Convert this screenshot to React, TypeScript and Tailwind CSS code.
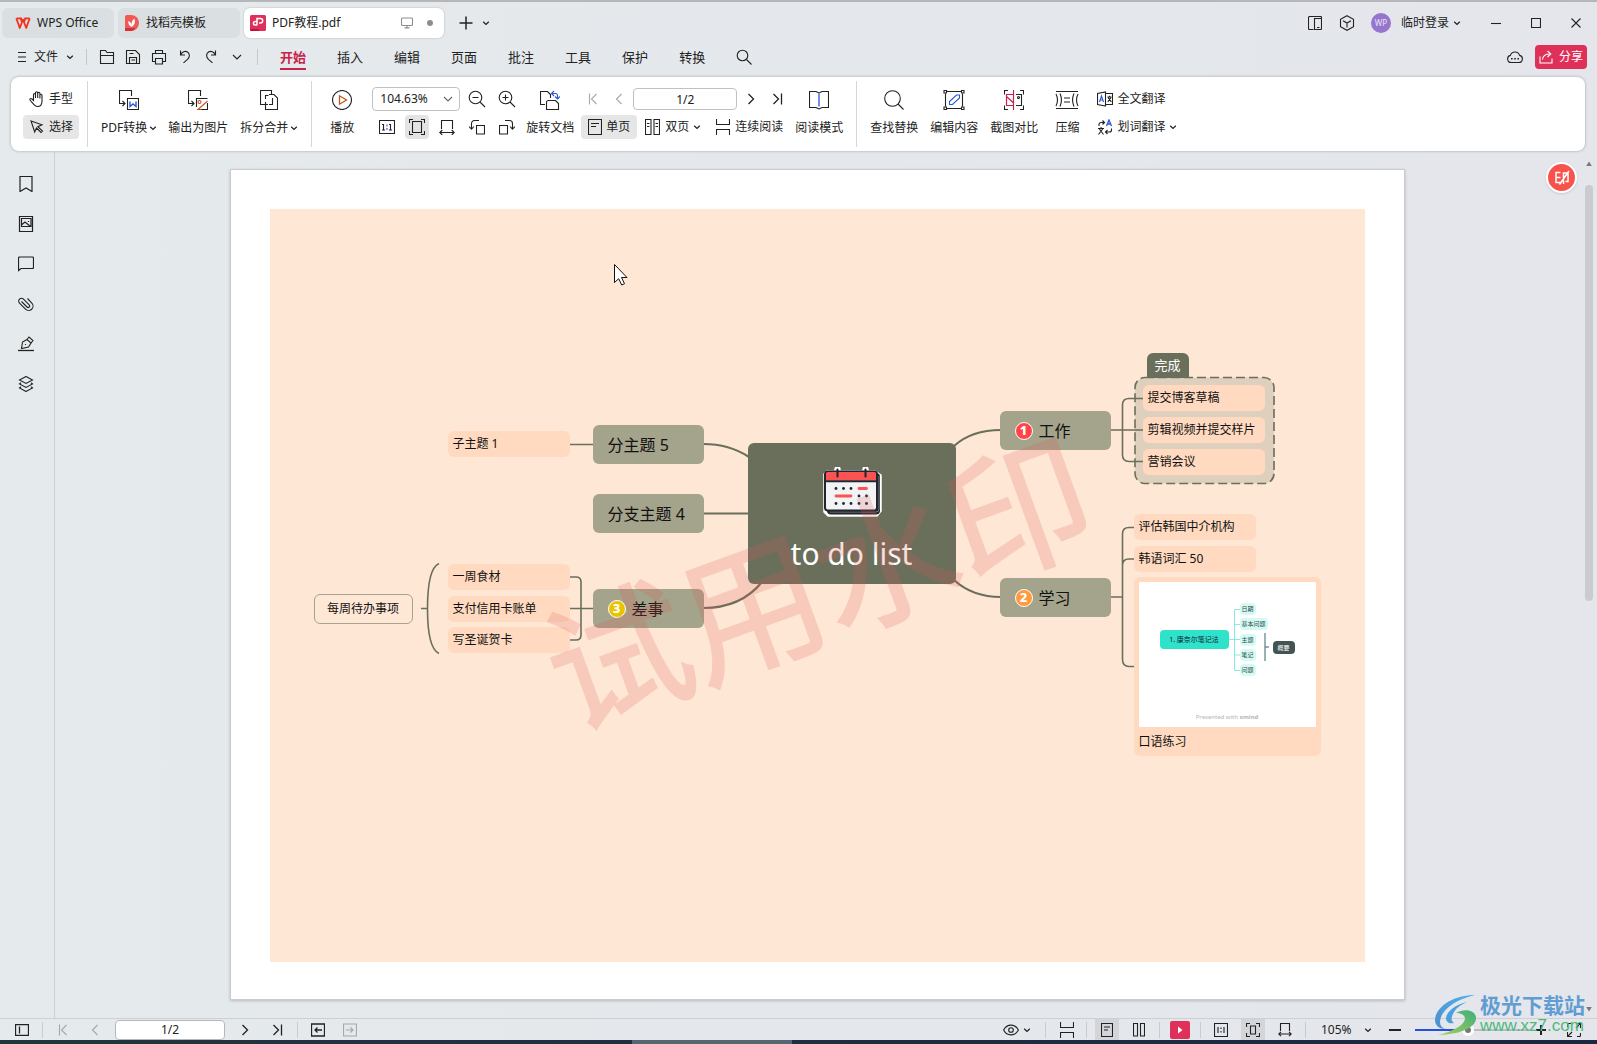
import React from "react";

type SvgProps = { w?: number; h?: number; className?: string; children: React.ReactNode };

function Svg({ w = 16, h = 16, className = "", children }: SvgProps) {
  return (
    <svg
      width={w}
      height={h}
      viewBox={`0 0 ${w} ${h}`}
      fill="none"
      stroke="currentColor"
      strokeWidth="1.1"
      className={`shrink-0 ${className}`}
      aria-hidden="true"
    >
      {children}
    </svg>
  );
}

const Chevron = ({ className = "" }: { className?: string }) => (
  <Svg w={8} h={8} className={className}>
    <path d="M1.2 2.8 4 5.4 6.800 2.800" strokeWidth="1.3" />
  </Svg>
);
const WideChevron = ({ className = "" }: { className?: string }) => (
  <Svg w={10} h={8} className={className}>
    <path d="M1 2 5 6 9 2" />
  </Svg>
);
const FirstIcon = () => (
  <Svg w={12} h={12}>
    <path d="M2.500 0.500v11M9.500 1 4.500 6l5 5" />
  </Svg>
);
const PrevIcon = () => (
  <Svg w={12} h={12}>
    <path d="M8.500 1 3.500 6l5 5" />
  </Svg>
);
const NextIcon = () => (
  <Svg w={12} h={12}>
    <path d="M3.500 1 8.500 6l-5 5" strokeWidth="1.3" />
  </Svg>
);
const LastIcon = () => (
  <Svg w={12} h={12}>
    <path d="M10.500 0.500v11M2.500 1l5 5-5 5" strokeWidth="1.3" />
  </Svg>
);
const Magnifier = ({ sign = "" }: { sign?: "" | "+" | "-" }) => (
  <Svg w={18} h={18}>
    <circle cx="7.500" cy="7.500" r="6.300" />
    <path d="m12 12 5 5" />
    {sign !== "" && <path d="M4.500 7.500h6" />}
    {sign === "+" && <path d="M7.500 4.500v6" />}
  </Svg>
);
const FitPage = () => (
  <Svg>
    <path d="M0.500 4V0.500H4M12 0.500h3.500V4M15.500 12v3.500H12M4 15.500H0.500V12" />
    <path d="M3.500 2.500h9v11h-9z" />
  </Svg>
);
const FitWidth = () => (
  <Svg>
    <path d="M2.500 10V1.500h11V10M0.800 13.500h14.400M3.300 11l-2.500 2.500L3.300 16M12.700 11l2.500 2.500-2.500 2.500" />
  </Svg>
);
const SinglePage = () => (
  <Svg w={14} h={16}>
    <path d="M0.500 0.500h13v15h-13zM3 4.500h8M3 7.500h5" />
  </Svg>
);
const Continuous = () => (
  <Svg w={14} h={16}>
    <path d="M0.500 0v5.500h13V0M0.500 16v-5.500h13V16" />
  </Svg>
);

function WpsLogo() {
  return (
    <svg width="16" height="13" viewBox="0 0 16 13" className="shrink-0" aria-hidden="true">
      <path d="M1.500 1.400H6.800M9.400 1.400h5.200" stroke="#f4321f" strokeWidth="1.800" fill="none" />
      <path d="M1.300 1.400 4.800 11 8 2.500 11.200 11 14.700 1.400M5.600 1.400 6.900 5M10.200 1.400 9.100 5" stroke="#f4321f" strokeWidth="1.800" fill="none" strokeLinejoin="round" />
    </svg>
  );
}

function DocerLogo() {
  return (
    <svg width="14" height="16" viewBox="0 0 14 16" className="shrink-0" aria-hidden="true">
      <path d="M2 0h4a8 8 0 0 1 0 16H0V2a2 2 0 0 1 2-2z" fill="#ee5a55" />
      <path d="M0 13h10.500A8 8 0 0 1 6 16H0z" fill="#d92d3a" />
      <path d="M6.500 12C4 10.500 3 8.500 3.300 6c2 .7 3 2.300 3.200 4C6.300 7.500 7.500 4.800 9.300 3.500c1.400 3.500.3 7-2.800 8.500z" fill="#fff" />
    </svg>
  );
}

function PdfLogo() {
  return (
    <svg width="16" height="16" viewBox="0 0 16 16" className="shrink-0" aria-hidden="true">
      <rect width="16" height="16" rx="1.500" fill="#df3059" />
      <path d="M0 14h8l2 2H1.500A1.500 1.500 0 0 1 0 14.500z" fill="#b81642" />
      <path d="M7 10.200V3.500h3.500a2.200 2.200 0 0 1 0 4.400H9M7 6.500H5.200a1.700 1.700 0 0 0 0 3.500H7" fill="none" stroke="#fff" strokeWidth="1.500" />
    </svg>
  );
}

function TitleBar() {
  return (
    <div className="flex shrink-0 items-center pt-1.5 pr-4 pl-[2px] text-xs">
      <div role="tablist" className="flex gap-1">
        <button role="tab" className="flex h-[30px] w-[112px] items-center gap-1.5 rounded-md bg-[#dadfe1] pl-[13px] whitespace-nowrap">
          <WpsLogo />
          WPS Office
        </button>
        <button role="tab" className="flex h-[30px] w-[122px] items-center gap-[7px] rounded-md bg-[#dadfe1] pl-[7px]">
          <DocerLogo />
          找稻壳模板
        </button>
        <button role="tab" aria-selected="true" className="flex h-[30px] w-[200px] items-center gap-1.5 rounded-md bg-white pl-1.5 pr-[11px] shadow-[0_0_2px_rgba(0,0,0,0.25)]">
          <PdfLogo />
          PDF教程.pdf
          <Svg w={12} h={12} className="ml-auto text-[#8b8f92]">
            <rect x="0.500" y="1" width="11" height="7.500" rx="1" />
            <path d="M3.500 10.900h5M6 8.500v2.500" />
          </Svg>
          <span className="ml-2 size-1.5 rounded-full bg-[#8b8f92]" />
        </button>
      </div>
      <button aria-label="新建标签" className="ml-[15px]">
        <Svg w={14} h={14}>
          <path d="M7 0.500v13M0.500 7h13" strokeWidth="1.500" />
        </Svg>
      </button>
      <button aria-label="标签列表" className="ml-[9px]">
        <Chevron />
      </button>
      <div className="ml-auto flex items-center">
        <button aria-label="侧栏">
          <Svg w={14} h={14}>
            <path d="M5.500 13.500H1.500a1 1 0 0 1-1-1v-11a1 1 0 0 1 1-1h11a1 1 0 0 1 1 1v1" />
            <path d="M6.500 2.500h7v10a1 1 0 0 1-1 1h-6zM9 11.500h2.500" />
          </Svg>
        </button>
        <button aria-label="应用" className="ml-[17px]">
          <Svg w={16} h={16}>
            <path d="M8 0.700 14.500 4.300v7.400L8 15.300 1.500 11.700V4.300zM4 5.700 8 8l4-2.300M8 8v4.500" />
          </Svg>
        </button>
        <button className="ml-4 flex items-center">
          <span className="flex size-5 items-center justify-center rounded-full bg-[#9575cd] text-[8px] text-white/80">WP</span>
          <span className="ml-2.5">临时登录</span>
          <Chevron className="ml-1" />
        </button>
        <button aria-label="最小化" className="ml-[30px]">
          <Svg w={10} h={10}>
            <path d="M0 5.500h10" />
          </Svg>
        </button>
        <button aria-label="最大化" className="ml-[30px]">
          <Svg w={10} h={10}>
            <path d="M0.500 0.500h9v9h-9z" />
          </Svg>
        </button>
        <button aria-label="关闭" className="ml-[30px]">
          <Svg w={10} h={10}>
            <path d="m0.500 0.500 9 9M9.500 0.500l-9 9" />
          </Svg>
        </button>
      </div>
    </div>
  );
}

const menus = ["开始", "插入", "编辑", "页面", "批注", "工具", "保护", "转换"];

function MenuBar() {
  return (
    <div className="flex h-[39px] shrink-0 items-center pr-2.5 pb-px pl-[17px] text-xs">
      <button className="flex items-center">
        <Svg w={10} h={12}>
          <path d="M1 1.500h8M1 6h8M1 10.500h8" />
        </Svg>
        <span className="ml-[7px]">文件</span>
        <Chevron className="ml-2" />
      </button>
      <div className="ml-3 h-4 w-px bg-[#c5c9cc]" />
      <div className="ml-3 flex items-center gap-2.5">
        <button aria-label="打开">
          <Svg>
            <path d="M1.500 14.500v-13h5l1.500 2h6.500v11zM1.500 6.500h13" />
          </Svg>
        </button>
        <button aria-label="保存">
          <Svg>
            <path d="M1.500 1.500h9l4 4v9h-13zM4.500 14.500v-6h7v6M6.500 11h3.500M4.500 4.500h4" />
          </Svg>
        </button>
        <button aria-label="打印">
          <Svg>
            <path d="M4.500 4.500v-3h7v3M4.500 12.500h-3v-8h13v8h-3M4.500 9.500h7v5.500h-7z" />
          </Svg>
        </button>
        <button aria-label="撤销">
          <Svg>
            <path d="M3.500 1.500v4.500h4.500M3.500 6c1.500-3 4.500-4.500 7-3 2.500 1.700 2.500 5 0 7.300L6.500 13.800" />
          </Svg>
        </button>
        <button aria-label="恢复">
          <Svg>
            <path d="M12.500 1.500v4.500H8M12.500 6c-1.500-3-4.500-4.500-7-3-2.500 1.700-2.500 5 0 7.300l4 3.500" />
          </Svg>
        </button>
        <button aria-label="更多" className="ml-[3px]">
          <WideChevron />
        </button>
      </div>
      <div className="ml-[15px] h-4 w-px bg-[#c5c9cc]" />
      <nav className="ml-[22px] flex gap-[31px] text-[13px]">
        {menus.map((m, i) => (
          <button
            key={m}
            className={
              i === 0
                ? "h-[26px] border-b-2 border-[#c9234d] pt-0.5 leading-5 font-bold text-[#c9234d]"
                : "h-[26px] border-b-2 border-transparent pt-0.5 leading-5"
            }
          >
            {m}
          </button>
        ))}
      </nav>
      <button aria-label="搜索" className="ml-[31px]">
        <Svg>
          <circle cx="6.500" cy="6.500" r="5.300" />
          <path d="m10.500 10.500 5 5" />
        </Svg>
      </button>
      <button aria-label="云同步" className="ml-auto">
        <Svg w={16} h={14}>
          <path d="M4.300 12.500a3.600 3.600 0 0 1-.9-7.100 4.800 4.800 0 0 1 9.200 0 3.600 3.600 0 0 1-.9 7.100z" />
          <path d="M4 8.800h1.600M7.200 8.800h1.600M10.400 8.800h1.600" strokeWidth="1.600" />
        </Svg>
      </button>
      <button className="ml-3 flex h-6 w-[52px] items-center justify-center gap-1.5 rounded bg-[#df3059] text-white">
        <Svg w={14} h={14}>
          <path d="M1 6.500v6.500h12V8.500M3.500 9.500C4 5.500 6.500 4 10.500 4M8.500 1l3.300 3-3.300 3" />
        </Svg>
        分享
      </button>
    </div>
  );
}

function BigButton({ icon, label, arrow = false, className = "" }: { icon: React.ReactNode; label: string; arrow?: boolean; className?: string }) {
  return (
    <button className={`flex shrink-0 flex-col items-center gap-1 ${className}`}>
      <span className="flex h-[26px] items-center">{icon}</span>
      <span className="flex h-[22px] items-center whitespace-nowrap">
        {label}
        {arrow && <Chevron className="ml-0.5" />}
      </span>
    </button>
  );
}

const Divider = ({ className = "" }: { className?: string }) => <div className={`-mt-1.5 -mb-2 h-[66px] w-px shrink-0 bg-[#d5d7d9] ${className}`} />;

const squareBtn = "flex size-6 shrink-0 items-center justify-center rounded";

function Ribbon() {
  return (
    <div className="mr-3 ml-[11px] flex shrink-0 items-start overflow-hidden rounded-lg bg-white pt-2.5 pb-3 text-xs whitespace-nowrap shadow-[0_0_3px_rgba(0,0,0,0.3)]">
      <div className="ml-3 flex w-14 shrink-0 flex-col gap-1">
        <button className="flex h-6 items-center justify-center gap-1">
          <Svg>
            <path d="M4.500 8V3.500a1 1 0 0 1 2 0V7M6.500 7V1.800a1 1 0 0 1 2.200 0V7M8.700 7V2.500a1 1 0 0 1 2.200 0V7.500M10.900 7V4.300a1 1 0 0 1 2.100 0V10c0 3.500-1.500 5.500-4.500 5.500S4.800 13.500 1 9c-.5-1.300 1-2 2-1l1.500 1.500V7" />
          </Svg>
          手型
        </button>
        <button className="flex h-6 items-center justify-center gap-1 rounded bg-[#e6e6e6]">
          <Svg>
            <path d="m2 2 11 3.800-4.200 1.900L13.500 12 12 13.500 7.500 9l-1.800 4z" />
          </Svg>
          选择
        </button>
      </div>
      <Divider className="ml-2" />
      <BigButton
        className="ml-[13px]"
        label="PDF转换"
        arrow
        icon={
          <Svg w={20} h={20}>
            <path d="M6 13.500H0.500v-13h12V6M3.500 11 6 13.500 3.500 16" />
            <path d="M8.500 8.500h11v11h-11z" />
            <path d="M11 11.500v5l3-2.500 3 2.500v-5" stroke="#2a56d8" strokeWidth="1.400" />
          </Svg>
        }
      />
      <BigButton
        className="ml-[11px]"
        label="输出为图片"
        icon={
          <Svg w={20} h={20}>
            <path d="M6 13.500H0.500v-13h12V6M3.500 11 6 13.500 3.500 16" />
            <path d="M8.500 17V8.500h11M19.500 13v6.500H13" />
            <circle cx="11.500" cy="12" r="1.500" stroke="#c8521b" />
            <path d="m10 19.500 9.500-8.500M13 19.500h-4" stroke="#c8521b" />
          </Svg>
        }
      />
      <BigButton
        className="ml-3"
        label="拆分合并"
        arrow
        icon={
          <Svg w={18} h={20}>
            <path d="M8 14.500H0.500v-14h11V4M5.500 12v7.500h12V8L14 4.500H9M5.500 9V5.500h3M12.500 8v6.500H9" />
          </Svg>
        }
      />
      <Divider className="ml-[13px]" />
      <BigButton
        className="ml-[18px]"
        label="播放"
        icon={
          <Svg w={20} h={20}>
            <circle cx="10" cy="10" r="9.500" />
            <path d="M7.500 5.800v8.400l7-4.200z" stroke="#c8521b" strokeWidth="1.300" />
          </Svg>
        }
      />
      <div className="ml-[18px] flex shrink-0 flex-col gap-1">
        <div className="flex items-center">
          <div className="relative flex items-center">
            <select aria-label="缩放比例" className="h-6 w-[88px] appearance-none rounded border border-[#bfc2c4] bg-white pl-[7px] outline-none">
              <option>104.63%</option>
            </select>
            <WideChevron className="pointer-events-none absolute right-[7px] text-[#666]" />
          </div>
          <button aria-label="缩小" className={`${squareBtn} ml-[5px]`}>
            <Magnifier sign="-" />
          </button>
          <button aria-label="放大" className={`${squareBtn} ml-1.5`}>
            <Magnifier sign="+" />
          </button>
        </div>
        <div className="ml-[3px] flex gap-1.5">
          <button aria-label="实际大小" className={squareBtn}>
            <Svg>
              <path d="M0.500 1.500h15v13h-15z" />
              <path d="M3 5.500h1.500v5.500M3 11h3M10 5.500h1.500v5.500M10 11h3" />
              <path d="M8 5.500v2M8 9v2" stroke="#2a56d8" />
            </Svg>
          </button>
          <button aria-label="适合页面" className={`${squareBtn} bg-[#e3e3e3]`}>
            <FitPage />
          </button>
          <button aria-label="适合宽度" className={squareBtn}>
            <FitWidth />
          </button>
          <button aria-label="向左旋转" className={squareBtn}>
            <Svg>
              <path d="M7.500 6.500h8v8.500h-8zM10 1.500H5.500a3 3 0 0 0-3 3V10M0 7.500l2.500 2.700L5 7.500" />
            </Svg>
          </button>
          <button aria-label="向右旋转" className={squareBtn}>
            <Svg>
              <path d="M0.500 6.500h8v8.500h-8zM6 1.500h4.500a3 3 0 0 1 3 3V10M11 7.500l2.500 2.700L16 7.500" />
            </Svg>
          </button>
        </div>
      </div>
      <BigButton
        className="ml-[7px]"
        label="旋转文档"
        icon={
          <Svg w={20} h={20}>
            <path d="M5 14.500H0.500v-13h7l3 3V8M6.500 12.500a2 2 0 0 1 2-2h7l3 3v6h-12z" />
            <path d="M12 3.500h3.500a2 2 0 0 1 2 2V8M14 1l-2.500 2.500L14 6M15 6.500 17.500 9 20 6.500" stroke="#2a56d8" />
          </Svg>
        }
      />
      <div className="ml-[7px] flex shrink-0 flex-col gap-1">
        <div className="flex h-6 items-center">
          <button aria-label="第一页" className={`${squareBtn} text-[#a6a8aa]`}>
            <FirstIcon />
          </button>
          <button aria-label="上一页" className={`${squareBtn} ml-0.5 text-[#a6a8aa]`}>
            <PrevIcon />
          </button>
          <input aria-label="页码" defaultValue="1/2" className="ml-0.5 h-[22px] w-[104px] rounded border border-[#bfc2c4] bg-white text-center outline-none" />
          <button aria-label="下一页" className={`${squareBtn} ml-0.5`}>
            <NextIcon />
          </button>
          <button aria-label="最后一页" className={`${squareBtn} ml-0.5`}>
            <LastIcon />
          </button>
        </div>
        <div className="flex h-6 items-center">
          <button className="flex h-6 w-14 items-center justify-center gap-1 rounded bg-[#e6e6e6]">
            <SinglePage />
            单页
          </button>
          <button className="ml-2 flex items-center">
            <Svg w={15} h={16}>
              <path d="M0.500 0.500h5.500v15H0.500zM9 0.500h5.500v15H9zM2 4.500h2.500M2 7.500h2.500M10.500 4.500H13M10.500 7.500H13" />
            </Svg>
            <span className="ml-[5px]">双页</span>
            <Chevron className="ml-1" />
          </button>
          <button className="ml-[15px] flex items-center gap-[5px]">
            <Continuous />
            连续阅读
          </button>
        </div>
      </div>
      <BigButton
        className="ml-1.5"
        label="阅读模式"
        icon={
          <Svg w={20} h={20}>
            <path d="M0.500 17.500V1.500h6.500l3 1.500 3-1.500h6.500v16H13l-3 1.500-3-1.500z" />
            <path d="M10 3.500v13" stroke="#2a56d8" strokeWidth="1.300" />
          </Svg>
        }
      />
      <Divider className="ml-[13px]" />
      <BigButton
        className="ml-[13px]"
        label="查找替换"
        icon={
          <Svg w={20} h={20}>
            <circle cx="8.500" cy="8.500" r="7.800" />
            <path d="m14 14 5.500 5.500" />
          </Svg>
        }
      />
      <BigButton
        className="ml-3"
        label="编辑内容"
        icon={
          <Svg w={22} h={20}>
            <path d="M4 1.500h14M4 18.500h14M2.500 3.500v13M19.500 3.500v13" />
            <path d="M1 0.500h2.500V3H1zM18.500 0.500H21V3h-2.500zM1 17h2.500v2.500H1zM18.500 17H21v2.500h-2.500z" fill="#fff" />
            <path d="M6.500 14.500v-3l7-6.500h3v3l-7 6.500z" stroke="#2a56d8" />
          </Svg>
        }
      />
      <BigButton
        className="ml-3"
        label="截图对比"
        icon={
          <Svg w={20} h={20}>
            <path d="M0.500 4.500v-4H4M16 0.500h3.500v4M19.500 15.500v4H16M4 19.500H0.500v-4M12 4.500h5.500v11H12" />
            <circle cx="14.500" cy="7.500" r="1" />
            <path d="M9.500 4.500h-7v11h7M9.500 0v20M2.500 6.500l7 6.500" stroke="#c9234d" strokeWidth="1.200" />
          </Svg>
        }
      />
      <BigButton
        className="ml-[17px]"
        label="压缩"
        icon={
          <Svg w={24} h={20}>
            <path d="M1 1.500h22M1 18.500h22M1 4c2 4 2 8 0 12M23 4c-2 4-2 8 0 12M5 3.500c2 4.500 2 8.500 0 13M19 3.500c-2 4.500-2 8.500 0 13M9 8h6M9 12h6" />
          </Svg>
        }
      />
      <div className="ml-[18px] flex shrink-0 flex-col gap-1">
        <button className="flex h-6 items-center gap-1">
          <Svg>
            <path d="M8.500 15 0.500 13.500v-11L8.500 1zM8.500 2.500h7v11h-7M10.500 6h4M12.500 4.800V6M10.800 10.800 14 6.500M11 6.500l3.300 4.300" />
            <path d="m2.500 11 2-6 2 6M3 9h3" stroke="#2a56d8" />
          </Svg>
          全文翻译
        </button>
        <button className="flex h-6 items-center">
          <Svg>
            <path d="M2 7V5.500a2 2 0 0 1 2-2h3M5.500 1.500 7.500 3.500l-2 2M14.500 9.500V11a2 2 0 0 1-2 2H9M10.500 11l-2 2 2 2M1 9.500h6M4 8v1.500M1.500 15.500 6 9.500M2 9.500l4.500 6" />
            <path d="m9.500 7 2.500-6 2.500 6M10.500 5h3" stroke="#2a56d8" strokeWidth="1.300" />
          </Svg>
          <span className="ml-1">划词翻译</span>
          <Chevron className="ml-1" />
        </button>
      </div>
    </div>
  );
}

function SideBar() {
  return (
    <aside className="flex w-[55px] shrink-0 flex-col items-center gap-6 border-r border-[#cdd0d2] pt-[25px] pr-[2px]">
      <button aria-label="书签">
        <Svg>
          <path d="M2 0.500h12v15L8 12 2 15.500z" strokeWidth="1.200" />
        </Svg>
      </button>
      <button aria-label="缩略图">
        <Svg>
          <path d="M1.500 0.500h13v15h-13zM3.500 2.500h9.500v8H3.500zM4 8.500 7 6l5.500 4.500M10.500 5v1" strokeWidth="1.200" />
        </Svg>
      </button>
      <button aria-label="批注">
        <Svg>
          <path d="M0.500 14.500V2a1 1 0 0 1 1-1h13a1 1 0 0 1 1 1v9.500a1 1 0 0 1-1 1H3z" strokeWidth="1.200" />
        </Svg>
      </button>
      <button aria-label="附件">
        <Svg>
          <path d="M3.500 5.500 9 11a1.500 1.500 0 0 0 2.200-2.200L5.500 3.100a2.800 2.800 0 0 0-4 4l6 6a4.200 4.200 0 0 0 6.300-6L9.500 2.500" />
        </Svg>
      </button>
      <button aria-label="签名">
        <Svg>
          <path d="M0 14.500h16" strokeWidth="1.300" />
          <path d="M3.500 12.500 4.500 6 9 3.500l4 3.500-2.500 4zM9 3.500 11 1l4 3.500-2 2.500M7.500 8v1" />
        </Svg>
      </button>
      <button aria-label="图层">
        <Svg>
          <path d="M8 0.500 14.500 4 8 7.500 1.500 4zM3 6.800 1.500 8 8 11.500 14.500 8 13 6.800M3 10.800 1.500 12 8 15.500 14.500 12 13 10.800" />
        </Svg>
      </button>
    </aside>
  );
}

const branch = "absolute flex h-[39px] w-[111px] items-center gap-1.5 rounded-md bg-[#a4a38b] pl-[15px] text-base leading-6 text-[#111]";
const leaf = "absolute flex h-[26px] w-[122px] items-center rounded-md bg-[#ffdac0] pl-[5px] text-xs text-[#111]";

function Marker({ n, className }: { n: number; className: string }) {
  return (
    <span className={`flex size-[18px] items-center justify-center rounded-full border border-white text-[13px] leading-none font-extrabold text-white ${className}`}>
      {n}
    </span>
  );
}

function CalendarArt() {
  const rows = [21.5, 29, 36.5];
  const cols = [14, 21.5, 29, 37, 44.5];
  return (
    <svg width="60" height="50" viewBox="0 0 60 50" aria-hidden="true">
      <path d="M5 4h8V2.500a2.500 2.500 0 0 1 5 0V4h23V2.500a2.500 2.500 0 0 1 5 0V4h7l6 4v36l-4 5H6l-4-4V7z" fill="#fff" stroke="#fff" strokeWidth="1.500" strokeLinejoin="round" />
      <rect x="5" y="6" width="53" height="41.500" rx="4" fill="#22252d" />
      <path d="M57 9v33q0 3-3 3H8" fill="none" stroke="#8e9498" strokeWidth="0.800" />
      <rect x="3" y="4.500" width="52" height="39" rx="3" fill="#f1f3f5" stroke="#22252d" strokeWidth="2" />
      <path d="M4 7a2 2 0 0 1 2-2h46a2 2 0 0 1 2 2v6.500H4z" fill="#fb5252" />
      <path d="M3 14.200h52M15.500 2.500v7M43.500 2.500v7" stroke="#22252d" strokeWidth="2" strokeLinecap="round" />
      {rows.map((y, r) =>
        cols.map((x, c) => {
          const hidden = (r === 0 && c > 2) || (r === 1 && c < 3);
          return hidden ? null : <circle key={`${r}-${c}`} cx={x} cy={y} r="1.400" fill="#22252d" />;
        })
      )}
      <path d="M37 21.500h7.500M14 29h15" stroke="#fb5252" strokeWidth="2.800" strokeLinecap="round" />
    </svg>
  );
}

const mini = "absolute flex h-3 items-center rounded-sm bg-[#d5faf4] px-0.5 text-[6px] leading-none text-[#2b4a48]";

function Thumbnail() {
  return (
    <div className="relative h-[145px] bg-white">
      <svg className="absolute inset-0 size-full" viewBox="0 0 177 145" fill="none" aria-hidden="true">
        <path d="M90 57.500h11M101 27.500h-5.500v61H101M95.500 42.500h5.500M95.500 73h5.500" stroke="#86ecdd" />
        <path d="M126 51v28M126 65h4" stroke="#35696c" />
      </svg>
      <span className="absolute top-12 left-[21px] flex h-[19px] w-[69px] items-center justify-center rounded-sm bg-[#2fe3cb] text-[7px] whitespace-pre text-[#123]">1. 康奈尔笔记法</span>
      <span className={`${mini} top-[21px] left-[101px]`}>日期</span>
      <span className={`${mini} top-9 left-[101px]`}>基本问题</span>
      <span className={`${mini} top-[52px] left-[101px]`}>主题</span>
      <span className={`${mini} top-[67px] left-[101px]`}>笔记</span>
      <span className={`${mini} top-[82px] left-[101px]`}>问题</span>
      <span className="absolute top-[59px] left-[134px] flex h-[13px] w-[22px] items-center justify-center rounded-sm bg-[#435552] text-[6px] text-white">概要</span>
      <span className="absolute bottom-1.5 left-0 w-full text-center text-[6px] leading-2 text-[#b5b5b5]">
        Presented with <b>xmind</b>
      </span>
    </div>
  );
}

function MindMap() {
  return (
    <div className="relative h-[753px] overflow-hidden bg-[#ffe7d6]">
      <svg className="absolute inset-0" width="1095" height="753" viewBox="270 209 1095 753" fill="none" stroke="#6a6f5b" aria-hidden="true">
        <rect x="1135" y="377.500" width="139" height="106" rx="10" fill="#dfcfbd" strokeWidth="1.600" strokeDasharray="9 4" />
        <g strokeWidth="2.200">
          <path d="M703 444c20 0 34 5 46 13M703 513.500h46M703 608c28 0 46-10 59-26M954 446c12-11 27-16 47-16M954 580c12 11 27 17 47 17" />
        </g>
        <g strokeWidth="1.600">
          <path d="M569 444.500h24M569 577h7q5 0 5 5v53q0 5-5 5h-7M569 608.500h24" />
          <path d="M439 563.500c-9 4-11.500 21-11.500 45s2.500 41 11.500 45M421 608.500h6.500" />
          <path d="M1111 430h33M1143 398.500h-14q-6.500 0-6.500 6.500v50q0 6.500 6.500 6.500h14" />
          <path d="M1111 597h11.500M1134 527.500h-5q-6.500 0-6.500 6.500v125q0 7.500 6.500 7.500h5M1134 559h-5q-6.500 0-6.500 6.500" />
        </g>
      </svg>

      <div className="absolute top-[234px] left-[478px] flex h-[141px] w-[208px] flex-col items-center rounded-md bg-[#6a6f5b] pt-6">
        <CalendarArt />
        <span className="mt-[17px] text-[30px] leading-10 text-white">to do list</span>
      </div>

      <div className={`${branch} top-[216px] left-[323px]`}>分主题 5</div>
      <div className={`${branch} top-[285px] left-[323px]`}>分支主题 4</div>
      <div className={`${branch} top-[380px] left-[323px]`}>
        <Marker n={3} className="bg-[#ebc400]" />
        差事
      </div>
      <div className={`${branch} top-[202px] left-[730px]`}>
        <Marker n={1} className="bg-[#ff4548]" />
        工作
      </div>
      <div className={`${branch} top-[369px] left-[730px]`}>
        <Marker n={2} className="bg-[#ff9a3d]" />
        学习
      </div>

      <div className={`${leaf} top-[222px] left-[178px]`}>子主题 1</div>
      <div className={`${leaf} top-[355px] left-[178px]`}>一周食材</div>
      <div className={`${leaf} top-[387px] left-[178px]`}>支付信用卡账单</div>
      <div className={`${leaf} top-[418px] left-[178px]`}>写圣诞贺卡</div>
      <div className="absolute top-[385px] left-[44px] flex h-[30px] w-[99px] items-center justify-center rounded-md border border-[#a4a38b] text-xs text-[#111]">每周待办事项</div>

      <div className="absolute top-[144px] left-[877px] flex h-[25px] w-[42px] items-center justify-center rounded-t-md bg-[#6a6f5b] text-[13px] text-white">完成</div>
      <div className={`${leaf} top-[176px] left-[873px]`}>提交博客草稿</div>
      <div className={`${leaf} top-[208px] left-[873px]`}>剪辑视频并提交样片</div>
      <div className={`${leaf} top-[240px] left-[873px]`}>营销会议</div>

      <div className={`${leaf} top-[305px] left-[864px]`}>评估韩国中介机构</div>
      <div className={`${leaf} top-[337px] left-[864px]`}>韩语词汇 50</div>
      <div className="absolute top-[368px] left-[864px] w-[187px] rounded-md bg-[#ffdac0] p-[5px] text-xs text-[#111]">
        <Thumbnail />
        <div className="mt-1.5 leading-[18px]">口语练习</div>
      </div>

      <div className="pointer-events-none absolute top-[373px] left-[548px] -translate-x-1/2 -translate-y-1/2 -rotate-[20deg] text-[142px] leading-none whitespace-nowrap text-[#e05a55] opacity-20 [-webkit-text-stroke:2px_#e05a55]">
        试用水印
      </div>

      <svg className="absolute top-[54px] left-[343px]" width="16" height="24" viewBox="0 0 16 24" aria-hidden="true">
        <path d="M1.500 1.500v18l4.200-3.800 3 6.300 2.800-1.300-3-6.200h5.500z" fill="#fff" stroke="#111" />
      </svg>
    </div>
  );
}

function SiteLogo() {
  return (
    <div className="pointer-events-none absolute right-3 bottom-2 flex items-center gap-0.5">
      <svg width="44" height="42" viewBox="0 0 44 42" aria-hidden="true">
        <defs>
          <linearGradient id="swirlBlue" x1="1" y1="0" x2="0" y2="1">
            <stop offset="0" stopColor="#4fb4ea" />
            <stop offset="1" stopColor="#4a8fce" />
          </linearGradient>
          <linearGradient id="swirlGreen" x1="1" y1="0" x2="0" y2="1">
            <stop offset="0" stopColor="#3fae7a" />
            <stop offset="1" stopColor="#a9cf5a" />
          </linearGradient>
        </defs>
        <path d="M41 1C20 1 2 12 1 26c0 5 4 9 10 9-5-2-6-6-4-12C11 13 24 5 41 1z" fill="url(#swirlBlue)" />
        <path d="M33 8C21 11 13 17 12 24c0 4 3 6 8 5-3-2-3-5-1-9 2-5 7-9 14-12z" fill="#4a9fdc" />
        <path d="M22 19c8-5 19-3 20 4 1 9-12 17-38 18 16-4 26-10 27-16 0-4-4-6-9-6z" fill="url(#swirlGreen)" />
      </svg>
      <div className="flex flex-col">
        <span className="text-[21px] leading-[22px] font-bold text-[#5f9dd3]">极光下载站</span>
        <span className="font-['Liberation_Sans',sans-serif] text-[17px] leading-5 text-[#4fb97b]">www.xz7.com</span>
      </div>
    </div>
  );
}

const Bar = ({ className = "" }: { className?: string }) => <div className={`h-4 w-px shrink-0 bg-[#c9ccce] ${className}`} />;

function StatusBar() {
  return (
    <footer className="flex h-[22px] shrink-0 items-center border-t border-[#cdd0d2] pr-4 pl-[15px] text-xs">
      <button aria-label="导航窗格">
        <Svg w={14} h={12}>
          <path d="M0.500 0.500h13v11H0.500zM4.500 2.500v7" strokeWidth="1.300" />
        </Svg>
      </button>
      <Bar className="ml-[13px]" />
      <button aria-label="第一页" className="ml-[14px] text-[#a6a8aa]">
        <FirstIcon />
      </button>
      <button aria-label="上一页" className="ml-5 text-[#a6a8aa]">
        <PrevIcon />
      </button>
      <input aria-label="当前页" defaultValue="1/2" className="ml-3.5 h-5 w-[110px] rounded border border-[#b5b8ba] bg-white text-center outline-none" />
      <button aria-label="下一页" className="ml-3.5">
        <NextIcon />
      </button>
      <button aria-label="最后一页" className="ml-5">
        <LastIcon />
      </button>
      <Bar className="ml-[14px]" />
      <button aria-label="后退" className="ml-[13px]">
        <Svg w={14} h={14}>
          <path d="M0.500 1h13v12h-13zM4 7h7M6.500 4.500 4 7l2.500 2.500" strokeWidth="1.300" />
        </Svg>
      </button>
      <button aria-label="前进" className="ml-[18px] text-[#a6a8aa]">
        <Svg w={14} h={14}>
          <path d="M0.500 1h13v12h-13zM3 7h7M7.500 4.500 10 7l-2.500 2.500" strokeWidth="1.200" />
        </Svg>
      </button>

      <div className="ml-auto flex items-center">
        <button aria-label="护眼模式" className="flex items-center gap-1">
          <Svg w={16} h={14}>
            <path d="M0.600 7C4 0.500 12 0.500 15.400 7 12 13.500 4 13.500 0.600 7z" />
            <circle cx="8" cy="7" r="2.300" />
          </Svg>
          <Chevron />
        </button>
        <Bar className="ml-3.5" />
        <button aria-label="连续滚动" className="ml-3.5">
          <Continuous />
        </button>
        <Bar className="ml-3" />
        <button aria-label="单页" className="ml-2 flex h-[21px] w-6 items-center justify-center bg-[#d3d5d8]">
          <Svg w={12} h={14}>
            <path d="M0.500 0.500h11v13H0.500zM3 4h6M3 7h4" />
          </Svg>
        </button>
        <button aria-label="双页" className="ml-3.5">
          <Svg w={12} h={14}>
            <path d="M0.500 0.500h4v12.500h-4zM7.500 0.500h4v12.500h-4z" />
          </Svg>
        </button>
        <Bar className="ml-3.5" />
        <button aria-label="播放" className="ml-2.5 flex h-[18px] w-5 items-center justify-center rounded-xs bg-[#df3059] text-white">
          <Svg w={8} h={8}>
            <path d="M2 0.500v7L6.500 4z" fill="currentColor" stroke="none" />
          </Svg>
        </button>
        <Bar className="ml-2.5" />
        <button aria-label="实际大小" className="ml-[13px]">
          <Svg w={14} h={14}>
            <path d="M0.500 0.500h13v13H0.500zM4 4v6M10 4v6M7 4.500v1.500M7 8v1.500" />
          </Svg>
        </button>
        <button aria-label="适合页面" className="ml-[13px] flex h-[21px] w-6 items-center justify-center bg-[#d3d5d8]">
          <Svg w={14} h={14}>
            <path d="M0.500 4V0.500H4M10 0.500h3.500V4M13.500 10v3.500H10M4 13.500H0.500V10M4.500 3h5v8h-5z" />
          </Svg>
        </button>
        <button aria-label="适合宽度" className="ml-[13px]">
          <Svg w={14} h={14}>
            <path d="M2.500 8V0.500h9V8M0.800 11h12.400M3 8.800 0.800 11 3 13.200M11 8.800l2.200 2.200-2.200 2.200" />
          </Svg>
        </button>
        <Bar className="ml-[13px]" />
        <div className="relative ml-[15px] flex items-center">
          <select aria-label="显示比例" className="w-[51px] appearance-none bg-transparent outline-none">
            <option>105%</option>
          </select>
          <Chevron className="pointer-events-none absolute right-0" />
        </div>
        <button aria-label="缩小" className="ml-[17px]">
          <Svg w={12} h={12}>
            <path d="M0 6h12" strokeWidth="2" />
          </Svg>
        </button>
        <input
          type="range"
          aria-label="缩放"
          defaultValue={45}
          className="ml-3.5 h-3 w-[116px] appearance-none bg-[linear-gradient(to_right,#2551dd_46%,#b9bcc0_46%)] bg-[length:100%_2px] bg-center bg-no-repeat [&::-webkit-slider-thumb]:size-3 [&::-webkit-slider-thumb]:appearance-none [&::-webkit-slider-thumb]:rounded-full [&::-webkit-slider-thumb]:border-[3px] [&::-webkit-slider-thumb]:border-white [&::-webkit-slider-thumb]:bg-[#777]"
        />
        <button aria-label="放大" className="ml-1">
          <Svg w={12} h={12}>
            <path d="M1 6h10M6 1v10" strokeWidth="2" />
          </Svg>
        </button>
        <button aria-label="全屏" className="ml-5">
          <Svg w={14} h={14}>
            <path d="M0.500 4V1.500a1 1 0 0 1 1-1H4M9 0.500h4.500V5M13.500 10v2.500a1 1 0 0 1-1 1H10M5 13.500H0.500V9M13.500 0.500 9 5M0.500 13.500 5 9" />
          </Svg>
        </button>
      </div>
    </footer>
  );
}

export default function App() {
  return (
    <div className="relative flex h-screen flex-col overflow-hidden bg-linear-to-r from-[#e5eaec] to-[#e4e6ec] font-['Noto_Sans','Noto_Sans_CJK_SC',sans-serif] text-[#222]">
      <div className="h-[2px] shrink-0 bg-[#b6b7b8]" />
      <TitleBar />
      <MenuBar />
      <Ribbon />
      <div className="flex min-h-0 flex-1">
        <SideBar />
        <main className="flex min-w-0 flex-1 justify-center overflow-hidden pt-[18px] pr-0.5">
          <div className="h-[831px] w-[1175px] shrink-0 border border-[#c9cccf] bg-white px-[39px] pt-[39px] shadow-[0_1px_3px_rgba(0,0,0,0.2)]">
            <MindMap />
          </div>
        </main>
        <div className="relative flex w-4 shrink-0 flex-col items-center justify-between pt-2.5 pb-1.5 text-[#77797c]">
          <button aria-label="向上滚动">
            <Svg w={6} h={6}>
              <path d="M3 0.500 5.800 5H0.200z" fill="currentColor" stroke="none" />
            </Svg>
          </button>
          <div className="mt-[18px] w-2 basis-[416px] rounded bg-[#c9cbcf]" />
          <button aria-label="向下滚动" className="mt-auto">
            <Svg w={6} h={6}>
              <path d="M0.200 1h5.600L3 5.500z" fill="currentColor" stroke="none" />
            </Svg>
          </button>
          <button aria-label="去水印" className="absolute top-[11px] right-5 flex size-[31px] items-center justify-center rounded-full border-2 border-white bg-[#f9524d] text-white shadow-sm">
            <Svg w={16} h={16}>
              <path d="M6.500 2.500H2v10.500M2 7.500h4.500M1.500 12.500H7M9.500 14V3h4.500v8.500h-2.500M15 1 5.500 14.500" strokeWidth="1.500" />
            </Svg>
          </button>
        </div>
      </div>
      <StatusBar />
      <div className="flex h-1 shrink-0 justify-center bg-linear-to-r from-[#20363f] to-[#1a2740]">
        <div className="w-[160px] -translate-x-[87px] bg-[#566670]" />
      </div>
      <SiteLogo />
    </div>
  );
}
